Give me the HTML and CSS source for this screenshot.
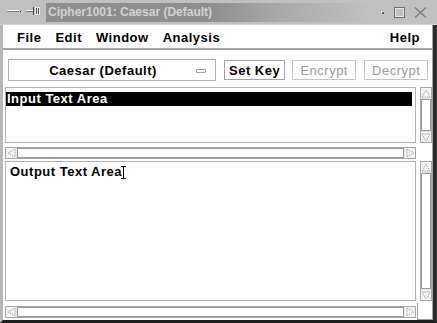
FILE: index.html
```html
<!DOCTYPE html>
<html lang="en">

<head>
    <meta charset="UTF-8">
    <title>Cipher1001: Caesar (Default)</title>
    <link rel="stylesheet" href="styles.css">
</head>

<body>
    <div class="window">
        <header class="titlebar">
            <svg class="tb-menu" width="34" height="12" viewBox="0 0 34 12">
                <rect x="0" y="4" width="12" height="1" fill="#ffffff" />
                <rect x="0" y="5" width="12" height="1" fill="#7a7a7a" />
                <rect x="13" y="5" width="1" height="1" fill="#202020" />
                <rect x="19" y="4" width="7" height="1" fill="#ffffff" />
                <rect x="19" y="5" width="7" height="1" fill="#7a7a7a" />
                <rect x="26" y="1" width="1" height="8" fill="#404040" />
                <rect x="28" y="1" width="5" height="8" fill="#e8e8e8" />
                <rect x="29" y="2" width="1" height="6" fill="#505050" />
                <rect x="31" y="2" width="1" height="6" fill="#505050" />
            </svg>
            <div class="title">Cipher1001: Caesar (Default)</div>
            <div class="title-fade"></div>
            <div class="tb-buttons">
                <svg width="3" height="3" viewBox="0 0 3 3">
                    <rect x="0" y="0" width="2" height="2" fill="#ffffff" />
                    <rect x="1" y="1" width="2" height="2" fill="#555555" />
                </svg>
                <svg width="11" height="11" viewBox="0 0 11 11">
                    <rect x="0.5" y="0.5" width="10" height="10" fill="none" stroke="#6e6e6e" />
                    <rect x="1.5" y="1.5" width="8" height="8" fill="none" stroke="#e4e4e4" />
                </svg>
                <svg width="13" height="11" viewBox="0 0 13 11">
                    <path d="M1 0.5 L12 10.5 M12 0.5 L1 10.5" stroke="#7c7c7c" stroke-width="1.3" fill="none" />
                </svg>
            </div>
        </header>

        <div class="frame">
            <nav class="menubar">
                <span>File</span>
                <span>Edit</span>
                <span>Window</span>
                <span>Analysis</span>
                <span class="help">Help</span>
            </nav>

            <div class="toolbar">
                <div class="combo">
                    <span>Caesar (Default)</span>
                    <i class="combo-mark"></i>
                </div>
                <button class="btn">Set Key</button>
                <button class="btn" disabled>Encrypt</button>
                <button class="btn" disabled>Decrypt</button>
            </div>

            <!-- input -->
            <section class="pane pane-input">
                <div class="textbox">
                    <div class="selected">Input Text Area</div>
                </div>
                <div class="vscroll">
                    <div class="arrow"><svg width="10" height="9" viewBox="0 0 10 9"><polygon points="1,8 5,1 9,8" fill="#f6f6f6" stroke="#a4a4a4" stroke-dasharray="1.5 1" /></svg></div>
                    <div class="thumb"></div>
                    <div class="arrow"><svg width="10" height="9" viewBox="0 0 10 9"><polygon points="1,1 5,8 9,1" fill="#f6f6f6" stroke="#a4a4a4" stroke-dasharray="1.5 1" /></svg></div>
                </div>
                <div class="hscroll">
                    <div class="arrow"><svg width="9" height="10" viewBox="0 0 9 10"><polygon points="8,1 1,5 8,9" fill="#f6f6f6" stroke="#a4a4a4" stroke-dasharray="1.5 1" /></svg></div>
                    <div class="thumb"></div>
                    <div class="arrow"><svg width="9" height="10" viewBox="0 0 9 10"><polygon points="1,1 8,5 1,9" fill="#f6f6f6" stroke="#a4a4a4" stroke-dasharray="1.5 1" /></svg></div>
                </div>
                <div></div>
            </section>

            <!-- output -->
            <section class="pane pane-output">
                <div class="textbox">
                    <div class="plain">Output Text Area<svg class="ibeam" width="5" height="13" viewBox="0 0 5 13"><path d="M0 0.5 H5 M2.5 0.5 V12.5 M0 12.5 H5" stroke="#000000" stroke-width="1" fill="none" /></svg></div>
                </div>
                <div class="vscroll">
                    <div class="arrow"><svg width="10" height="9" viewBox="0 0 10 9"><polygon points="1,8 5,1 9,8" fill="#f6f6f6" stroke="#a4a4a4" stroke-dasharray="1.5 1" /></svg></div>
                    <div class="thumb"></div>
                    <div class="arrow"><svg width="10" height="9" viewBox="0 0 10 9"><polygon points="1,1 5,8 9,1" fill="#f6f6f6" stroke="#a4a4a4" stroke-dasharray="1.5 1" /></svg></div>
                </div>
                <div class="hscroll">
                    <div class="arrow"><svg width="9" height="10" viewBox="0 0 9 10"><polygon points="8,1 1,5 8,9" fill="#f6f6f6" stroke="#a4a4a4" stroke-dasharray="1.5 1" /></svg></div>
                    <div class="thumb"></div>
                    <div class="arrow"><svg width="9" height="10" viewBox="0 0 9 10"><polygon points="1,1 8,5 1,9" fill="#f6f6f6" stroke="#a4a4a4" stroke-dasharray="1.5 1" /></svg></div>
                </div>
                <div class="corner"></div>
            </section>
        </div>
    </div>
</body>

</html>
```

FILE: styles.css
```css
/* Global */
* {
    box-sizing: border-box;
}

body {
    margin: 0;
    background-color: white;
    font-family: 'Liberation Sans', Arial, sans-serif;
}

.window {
    width: 437px;
    height: 323px;
    display: flex;
    flex-direction: column;
    background-color: white;
}

/* Title bar */
.titlebar {
    height: 25px;
    display: flex;
    align-items: center;
    background-color: #c0c0c0;
    border-bottom: 1px solid #d4d4d4;
}

.tb-menu {
    margin-left: 7px;
}

.title {
    margin-left: 5px;
    width: 166px;
    height: 19px;
    padding-left: 2px;
    background-color: #8e8e8e;
    color: #d2d2d2;
    font-size: 12px;
    font-weight: bold;
    line-height: 19px;
    white-space: nowrap;
}

.title-fade {
    width: 158px;
    height: 19px;
    background: linear-gradient(to right, #8e8e8e, #a8a8a8 40%, #c0c0c0);
}

.tb-buttons {
    display: flex;
    align-items: center;
    margin-left: 11px;
}

.tb-buttons svg:nth-child(2) {
    margin-left: 10px;
}

.tb-buttons svg:nth-child(3) {
    margin-left: 9px;
}

/* Frame */
.frame {
    flex: 1;
    display: flex;
    flex-direction: column;
    border-left: 3px solid #b8b8b8;
    border-right: 4px solid #2e2e2e;
    border-bottom: 3px solid #1e1e1e;
    box-shadow: inset -1px 0 0 #a0a0a0;
}

/* Menu bar */
.menubar {
    height: 25px;
    display: flex;
    align-items: center;
    padding: 2px 13px 0 14px;
    border-bottom: 2px solid #a6a6a6;
    font-size: 13px;
    font-weight: bold;
    letter-spacing: 0.5px;
    color: #000;
}

.menubar span {
    margin-right: 14px;
}

.menubar .help {
    margin-left: auto;
    margin-right: 0;
}

/* Toolbar */
.toolbar {
    display: flex;
    align-items: center;
    padding: 9px 0 6px 5px;
}

.combo {
    width: 208px;
    height: 22px;
    display: flex;
    align-items: center;
    justify-content: center;
    position: relative;
    border: 1px solid #b0b0b0;
    font-size: 13px;
    font-weight: bold;
    letter-spacing: 0.5px;
}

.combo span {
    margin-left: -18px;
}

.combo-mark {
    position: absolute;
    right: 9px;
    top: 9px;
    width: 10px;
    height: 4px;
    border: 1px solid #a0a0a0;
    border-radius: 1px;
}

.btn {
    height: 20px;
    margin-left: 8px;
    padding: 0 4px;
    background-color: white;
    border: 1px solid #a2a2a2;
    font-family: 'Liberation Sans', Arial, sans-serif;
    font-size: 13px;
    font-weight: bold;
    letter-spacing: 0.5px;
    color: #000;
}

.btn + .btn {
    margin-left: 7px;
}

.btn:disabled {
    width: 64px;
    border-color: #c4c4c4;
    color: #9a9a9a;
    font-weight: normal;
}

.btn:disabled + .btn:disabled {
    margin-left: 8px;
}

/* Panes */
.pane {
    display: grid;
    grid-template-columns: 411px 12px;
    column-gap: 4px;
    margin-left: 2px;
}

.pane-input {
    grid-template-rows: 56px 12px;
    row-gap: 4px;
    margin-bottom: 2px;
}

.pane-output {
    flex: 1;
    grid-template-rows: 1fr 12px;
    row-gap: 5px;
    margin-bottom: 2px;
}

.textbox {
    border: 1px solid #b4b4b4;
    padding: 4px 3px 0 0;
    font-size: 13px;
    font-weight: bold;
    letter-spacing: 0.5px;
    line-height: 14px;
}

.selected {
    background-color: #000;
    color: #fff;
    padding-left: 1px;
}

.pane-output .textbox {
    padding: 2px 0 0 4px;
    line-height: 15px;
}

.ibeam {
    vertical-align: -3px;
    margin-left: -1px;
}

/* Scroll bars */
.vscroll,
.hscroll {
    display: flex;
    border: 1px solid #a8a8a8;
    background-color: #e6e6e6;
}

.vscroll {
    flex-direction: column;
}

.arrow {
    flex: none;
    width: 10px;
    height: 10px;
    display: flex;
    align-items: center;
    justify-content: center;
    background-color: #f4f4f4;
}

.thumb {
    flex: 1;
    background-color: white;
    border: 1px solid #9a9a9a;
}

.vscroll .thumb {
    margin: 1px 0;
}

.hscroll .thumb {
    margin: 0 1px;
}

.corner {
    margin: -3px 0 -2px -3px;
    border-left: 1px solid #9c9c9c;
    border-bottom: 1px solid #9c9c9c;
    background-color: white;
}
```
